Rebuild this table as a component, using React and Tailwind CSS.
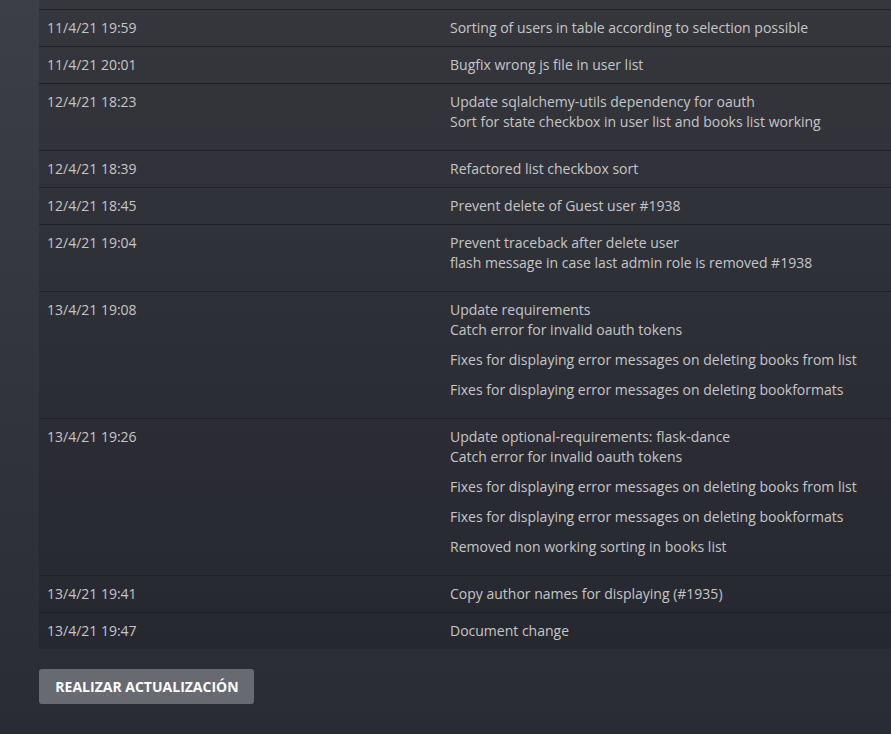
import React from "react";

const rows = [
  { date: "", msgs: [[""]], top: true },
  { date: "11/4/21 19:59", msgs: [["Sorting of users in table according to selection possible"]] },
  { date: "11/4/21 20:01", msgs: [["Bugfix wrong js file in user list"]] },
  {
    date: "12/4/21 18:23",
    multi: true,
    msgs: [["Update sqlalchemy-utils dependency for oauth", "Sort for state checkbox in user list and books list working"]],
  },
  { date: "12/4/21 18:39", msgs: [["Refactored list checkbox sort"]] },
  { date: "12/4/21 18:45", msgs: [["Prevent delete of Guest user #1938"]] },
  {
    date: "12/4/21 19:04",
    multi: true,
    msgs: [["Prevent traceback after delete user", "flash message in case last admin role is removed #1938"]],
  },
  {
    date: "13/4/21 19:08",
    multi: true,
    msgs: [
      ["Update requirements", "Catch error for invalid oauth tokens"],
      ["Fixes for displaying error messages on deleting books from list"],
      ["Fixes for displaying error messages on deleting bookformats"],
    ],
  },
  {
    date: "13/4/21 19:26",
    multi: true,
    msgs: [
      ["Update optional-requirements: flask-dance", "Catch error for invalid oauth tokens"],
      ["Fixes for displaying error messages on deleting books from list"],
      ["Fixes for displaying error messages on deleting bookformats"],
      ["Removed non working sorting in books list"],
    ],
  },
  { date: "13/4/21 19:41", msgs: [["Copy author names for displaying (#1935)"]] },
  { date: "13/4/21 19:47", msgs: [["Document change"]] },
];

export default function App() {
  return (
    <div
      className="w-[891px] h-[734px] overflow-hidden bg-gradient-to-b from-[#3d3f46] via-[#33353d] to-[#2a2c35] text-[#c6c6c6] text-[14px] leading-[20px]"
      style={{ fontFamily: '"Open Sans", "Liberation Sans", sans-serif' }}
    >
      <div className="ml-[39px] bg-black/[0.12]">
        {rows.map((r, i) =>
          r.top ? (
            <div key={i} className="h-[9px]" />
          ) : (
            <div key={i} className="flex border-t border-[#1f2126]">
              <div className="w-[403px] shrink-0 p-2">{r.date}</div>
              <div className="flex-1 p-2">
                {r.msgs.map((p, j) => (
                  <p key={j} className={r.multi ? "mb-[10px]" : ""}>
                    {p.map((line, k) => (
                      <React.Fragment key={k}>
                        {k > 0 && <br />}
                        {line}
                      </React.Fragment>
                    ))}
                  </p>
                ))}
              </div>
            </div>
          )
        )}
      </div>
      <div className="ml-[39px] mt-[20px]">
        <button className="w-[215px] h-[35px] rounded-[3px] bg-[#676a70] text-white font-bold text-[14px] pl-[1px]">
          REALIZAR ACTUALIZACIÓN
        </button>
      </div>
    </div>
  );
}
